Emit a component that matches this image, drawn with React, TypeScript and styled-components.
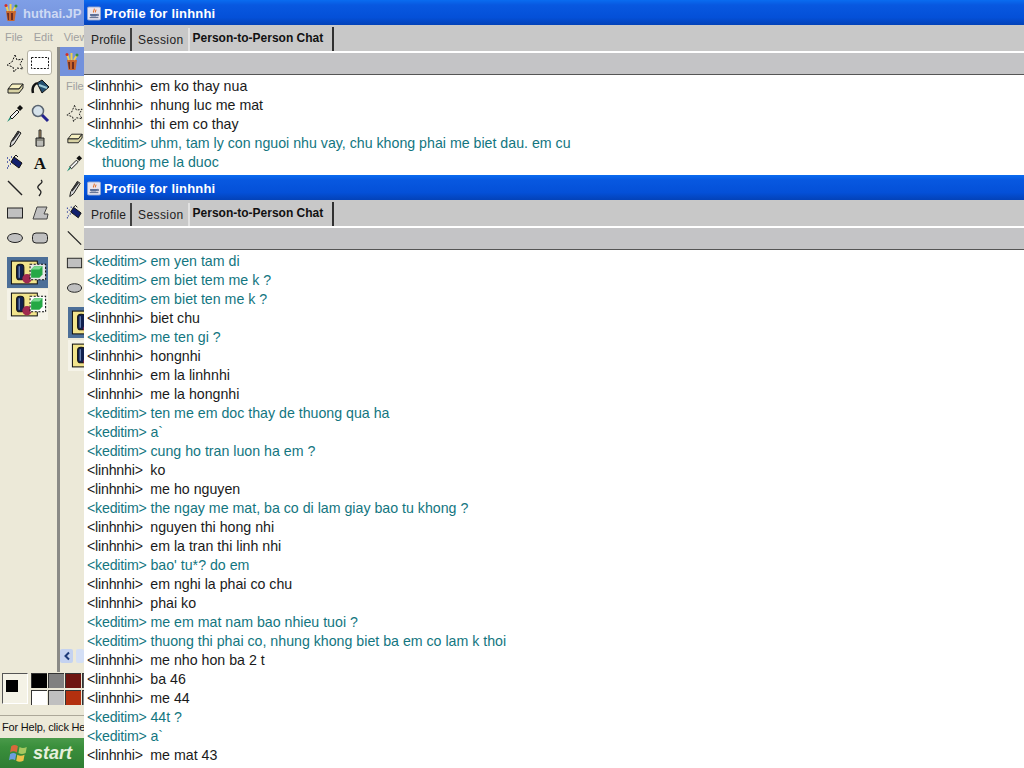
import React from "react";
import styled, { createGlobalStyle } from "styled-components";

//--------------------------------------------------------------------

const GlobalStyle = createGlobalStyle`
  html, body { margin: 0; padding: 0; background: #ece9d8; overflow: hidden; }
  #root { width: 1024px; height: 768px; }
`;

type Line = { who: "l" | "k"; nick?: string; text: string; wrap?: boolean };

const l = (text: string): Line => ({ who: "l", nick: "<linhnhi>  ", text });
const k = (text: string): Line => ({ who: "k", nick: "<keditim> ", text });

const topLines: Line[] = [
  l("em ko thay nua"),
  l("nhung luc me mat"),
  l("thi em co thay"),
  k("uhm, tam ly con nguoi nhu vay, chu khong phai me biet dau. em cu"),
  { who: "k", text: "thuong me la duoc", wrap: true },
];

const bottomLines: Line[] = [
  k("em yen tam di"),
  k("em biet tem me k ?"),
  k("em biet ten me k ?"),
  l("biet chu"),
  k("me ten gi ?"),
  l("hongnhi"),
  l("em la linhnhi"),
  l("me la hongnhi"),
  k("ten me em doc thay de thuong qua ha"),
  k("a`"),
  k("cung ho tran luon ha em ?"),
  l("ko"),
  l("me ho nguyen"),
  k("the ngay me mat, ba co di lam giay bao tu khong ?"),
  l("nguyen thi hong nhi"),
  l("em la tran thi linh nhi"),
  k("bao' tu*? do em"),
  l("em nghi la phai co chu"),
  l("phai ko"),
  k("me em mat nam bao nhieu tuoi ?"),
  k("thuong thi phai co, nhung khong biet ba em co lam k thoi"),
  l("me nho hon ba 2 t"),
  l("ba 46"),
  l("me 44"),
  k("44t ?"),
  k("a`"),
  l("me mat 43"),
];

const JavaIcon = () => (
  <svg width="14" height="15" viewBox="0 0 16 16">
    <rect x="0.5" y="0.5" width="15" height="15" rx="1.5" fill="#e9e4ee" stroke="#8fa4cf" />
    <path d="M8 2.500c1.600 1.600-1.800 2.600-.4 4.400M10 3.500c.9 1.200-1.200 1.900-.3 3.200" fill="none" stroke="#e2702a" strokeWidth="1.2" />
    <path d="M3.500 8.500h8v1.400c0 1-1 1.600-2 1.600h-4c-1 0-2-.6-2-1.600z" fill="#5d6f97" />
    <path d="M11.500 9h1.500v1.500h-1.500M3 12.700h10" fill="none" stroke="#46587f" strokeWidth="1" />
  </svg>
);

const PaintIcon = () => (
  <svg width="18" height="20" viewBox="0 0 18 20">
    <path d="M4 8h10l-1.500 10h-7z" fill="#c9662c" />
    <path d="M6 8 4 2M8.500 8 8.500 1M11 8 14 3" stroke="#f0d050" strokeWidth="2" />
    <path d="M5 10h2v7H6zM9 10h2v7H9z" fill="#6d2e22" />
    <circle cx="4" cy="2.500" r="1.500" fill="#d3302a" />
    <circle cx="14" cy="3" r="1.500" fill="#3d8f3a" />
  </svg>
);

const tools: React.ReactNode[] = [
  <path key="star" d="M10 2l2 5 6-1-3 5 3 5-6-1-3 4-1-5-6-2 5-3z" fill="none" stroke="#111" strokeDasharray="2 1.400" />,
  <rect key="select" x="1.500" y="4.500" width="17" height="11" fill="none" stroke="#111" strokeDasharray="2 1.400" />,
  <g key="eraser"><path d="M3 11l4-5h11l-4 5z" fill="#f6f0c0" stroke="#222" /><path d="M3 11v4h11l4-5V6l-4 5z" fill="#d8d2a4" stroke="#222" /></g>,
  <g key="fill"><path d="M7 5l5-3 7 7-7 6z" fill="#234e6e" stroke="#111" /><path d="M9 7l8 3" stroke="#9cc9d6" strokeWidth="2" /><path d="M7 5C3 7 2 11 3 15" fill="none" stroke="#111" strokeWidth="2.500" /></g>,
  <g key="dropper"><path d="M5 14l7-7 2 2-7 7z" fill="#eee" stroke="#111" /><path d="M12 5l3-3 3 3-3 3z" fill="#111" /><path d="M2 19l4-3-1-2z" fill="#1c8c74" /></g>,
  <g key="zoom"><circle cx="8" cy="8" r="5.500" fill="#d6e2ea" stroke="#5a6470" strokeWidth="1.500" /><path d="M12 12l6 6" stroke="#23238e" strokeWidth="3" /></g>,
  <g key="pencil"><path d="M6 14l7-11 3 2-7 11-4 3z" fill="#ddd" stroke="#111" /><path d="M7 13l7-9" stroke="#333" strokeWidth="2" /></g>,
  <g key="brush"><path d="M9 2h2v8H9z" fill="#b09060" stroke="#333" /><path d="M6 10h8v8H6z" fill="#8a8a80" stroke="#222" /><path d="M8 13v5M10 13v5M12 13v5" stroke="#eee" /></g>,
  <g key="spray"><path d="M9 4l8 6-3 5-8-6z" fill="#12206e" stroke="#111" /><path d="M9 4l2-2 2 2" fill="none" stroke="#111" /><path d="M2 5h1M4 7h1M2 9h1M5 11h1M3 13h1M6 4h1M2 15h1" stroke="#3040a0" strokeWidth="1.500" /></g>,
  <text key="text" x="10" y="16" textAnchor="middle" fontFamily="Liberation Serif, serif" fontWeight="700" fontSize="17" fill="#111">A</text>,
  <path key="line" d="M3 3l14 14" stroke="#222" strokeWidth="1.400" />,
  <path key="curve" d="M11 2c4 3-5 5-3 8s5 3 1 8" fill="none" stroke="#222" strokeWidth="1.300" />,
  <rect key="rect" x="2.500" y="5" width="15" height="10" fill="#c0c0c0" stroke="#222" />,
  <path key="poly" d="M7 4h10l-3 7h4l-1 5H3z" fill="#c0c0c0" stroke="#444" />,
  <ellipse key="ellipse" cx="10" cy="10" rx="7.500" ry="4.500" fill="#c0c0c0" stroke="#222" />,
  <rect key="round" x="2.500" y="5" width="15" height="10" rx="3.500" fill="#c0c0c0" stroke="#222" />,
];

const OptionArt = ({ dashed }: { dashed?: boolean }) => (
  <svg width="38" height="29" viewBox="0 0 36 28">
    <rect x="2" y="3" width="25" height="22" fill="#f2e48c" stroke="#111" />
    <rect x="7" y="6" width="7" height="15" rx="3" fill="#10204e" stroke="#111" />
    <path d="M9.500 8v11" stroke="#8aa6d8" />
    <circle cx="17" cy="20" r="4.500" fill="#a02a50" />
    <rect x="20" y="6" width="15" height="15" fill={dashed ? "#fff" : "#e8e8e8"} stroke="#111" strokeDasharray="2 1.500" />
    <path d="M21 11l3-3h8v8l-3 3h-8z" fill="#25a845" />
    <path d="M24 8h8l-3 3h-8z" fill="#7ad890" />
  </svg>
);

const StartLogo = () => (
  <svg width="20" height="20" viewBox="0 0 18 18">
    <path d="M2 3c2-1.500 4-1.500 6 0l-1 5.500c-2-1.400-4-1.400-6 0z" fill="#d9683c" />
    <path d="M9.500 3.500c2 1.200 4 1.200 6.500 0l-1 5.500c-2.400 1.200-4.500 1.200-6.500 0z" fill="#a6c860" />
    <path d="M1 10c2-1.400 4-1.400 5.500 0l-1 5.500c-1.800-1.300-3.500-1.300-5.500 0z" fill="#6d9ee0" />
    <path d="M7.500 10.500c2 1.200 4 1.200 6.500 0l-1 5.500c-2.400 1.200-4.500 1.200-6.500 0z" fill="#ecc24a" />
  </svg>
);

const App = () => (
  <Desktop>
    <GlobalStyle />
    <PaintWindow>
      <PaintTitle><PaintIcon />huthai.JP</PaintTitle>
      <PaintMenu><span>File</span><span>Edit</span><span>View</span></PaintMenu>
      <PaintBody>
        <ToolGrid>
          {tools.map((t, i) => (
            <ToolButton key={i} $active={i === 1}>
              <svg width="20" height="20" viewBox="0 0 20 20">{t}</svg>
            </ToolButton>
          ))}
        </ToolGrid>
        <OptionBox>
          <OptionCell $active><OptionArt /></OptionCell>
          <OptionCell><OptionArt dashed /></OptionCell>
        </OptionBox>
      </PaintBody>
      <Palette>
        <CurrentColour><FrontColour /></CurrentColour>
        <Swatches>
          {["#000", "#808080", "#6e1510", "#555", "#fff", "#c0c0c0", "#b3300f", "#888"].map((c, i) => (
            <Swatch key={i} $colour={c} />
          ))}
        </Swatches>
      </Palette>
      <StatusBar>For Help, click He</StatusBar>
      <StartButton><StartLogo /><i>start</i></StartButton>
    </PaintWindow>

    <InnerPaint>
      <InnerIcon><PaintIcon /></InnerIcon>
      <InnerMenu>File</InnerMenu>
      <InnerTools>
        {[0, 2, 4, 6, 8, 10, 12, 14].map((i) => (
          <InnerTool key={i}>
            <svg width="20" height="20" viewBox="0 0 20 20">{tools[i]}</svg>
          </InnerTool>
        ))}
      </InnerTools>
      <InnerOptions>
        <OptionCell $active><OptionArt /></OptionCell>
        <OptionCell><OptionArt dashed /></OptionCell>
      </InnerOptions>
      <ScrollRow>
        <ScrollArrow>
          <svg width="8" height="10" viewBox="0 0 8 10">
            <path d="M6 1.500 2.500 5 6 8.500" fill="none" stroke="#1c3a78" strokeWidth="2" />
          </svg>
        </ScrollArrow>
        <ScrollThumb />
      </ScrollRow>
    </InnerPaint>

    <ProfileWindow $top={0} $height={176} lines={topLines} />
    <ProfileWindow $top={175} $height={593} lines={bottomLines} />
  </Desktop>
);

const ProfileWindow = ({ $top, $height, lines }: { $top: number; $height: number; lines: Line[] }) => (
  <JavaWindow $top={$top} $height={$height}>
    <JavaTitle><JavaIcon />Profile for linhnhi</JavaTitle>
    <TabStrip>
      <Tab>Profile</Tab>
      <SessionTab>Session</SessionTab>
      <ActiveTab>Person-to-Person Chat</ActiveTab>
    </TabStrip>
    <GrayBar />
    <ChatLog>
      {lines.map((line, i) => (
        <ChatLine key={i} $who={line.who} $wrap={line.wrap}>
          {line.nick && <Nick>{line.nick}</Nick>}
          {line.text}
        </ChatLine>
      ))}
    </ChatLog>
  </JavaWindow>
);

export default App;

const Desktop = styled.div`
  position: relative;
  width: 1024px;
  height: 768px;
  overflow: hidden;
  background: #ece9d8;
  font-family: "Liberation Sans", Arial, sans-serif;
`;

const PaintWindow = styled.div`
  width: 84px;
  height: 768px;
  display: flex;
  flex-direction: column;
  background: #ece9d8;
`;

const PaintTitle = styled.div`
  height: 26px;
  flex: none;
  display: flex;
  align-items: center;
  gap: 3px;
  padding-left: 2px;
  background: linear-gradient(#7f9fe6, #7391dc);
  color: #cdd9f4;
  font-weight: 700;
  font-size: 13px;
  white-space: nowrap;
  overflow: hidden;
`;

const PaintMenu = styled.div`
  height: 21px;
  flex: none;
  display: flex;
  align-items: center;
  gap: 11px;
  padding-left: 5px;
  font-size: 11px;
  color: #a0a0a0;
  white-space: nowrap;
  overflow: hidden;
`;

const PaintBody = styled.div`
  height: 623px;
  flex: none;
  width: 57px;
  padding-top: 3px;
  box-sizing: border-box;
`;

const ToolGrid = styled.div`
  display: grid;
  grid-template-columns: 25px 25px;
  grid-auto-rows: 25px;
  padding-left: 2px;
`;

const ToolButton = styled.div<{ $active?: boolean }>`
  display: flex;
  align-items: center;
  justify-content: center;
  border-radius: 3px;
  background: ${(p) => (p.$active ? "#fff" : "transparent")};
  border: 1px solid ${(p) => (p.$active ? "#b5b2a4" : "transparent")};
`;

const OptionBox = styled.div`
  margin: 7px 0 0 7px;
  width: 41px;
  display: flex;
  flex-direction: column;
  gap: 1px;
`;

const OptionCell = styled.div<{ $active?: boolean }>`
  height: 31px;
  display: flex;
  align-items: center;
  justify-content: center;
  background: ${(p) => (p.$active ? "#4d6f98" : "#f5f3e8")};
`;

const Palette = styled.div`
  height: 46px;
  flex: none;
  display: flex;
  gap: 3px;
  padding: 3px 0 0 2px;
  box-sizing: border-box;
  border-bottom: 1px solid #aca899;
  overflow: hidden;
`;

const CurrentColour = styled.div`
  flex: none;
  width: 26px;
  height: 31px;
  box-sizing: border-box;
  border: 1px solid;
  border-color: #555 #fff #fff #555;
  background: #f4f2e6;
  padding: 6px 3px;
`;

const FrontColour = styled.div`
  width: 12px;
  height: 12px;
  background: #000;
`;

const Swatches = styled.div`
  display: grid;
  grid-template-columns: repeat(4, 16px);
  grid-auto-rows: 15px;
  gap: 2px 1px;
`;

const Swatch = styled.div<{ $colour: string }>`
  background: ${(p) => p.$colour};
  border-top: 1px solid #333;
  border-left: 1px solid #333;
`;

const StatusBar = styled.div`
  height: 22px;
  flex: none;
  display: flex;
  align-items: center;
  padding-left: 2px;
  font-size: 11px;
  letter-spacing: -0.2px;
  color: #111;
  white-space: nowrap;
  overflow: hidden;
`;

const StartButton = styled.div`
  flex: 1;
  display: flex;
  align-items: center;
  gap: 4px;
  padding-left: 9px;
  background: linear-gradient(#4a9a4a, #3a8f3c 30%, #2f7d33);
  color: #e6f0dc;
  font-size: 18px;
  font-weight: 700;
`;

const InnerPaint = styled.div`
  position: absolute;
  left: 57px;
  top: 47px;
  width: 27px;
  height: 625px;
  overflow: hidden;
  background: #ece9d8;
  border-left: 3px solid #8a8a86;
  box-sizing: border-box;
`;

const InnerIcon = styled.div`
  height: 29px;
  display: flex;
  align-items: center;
  justify-content: center;
  background: #7391dc;
`;

const InnerMenu = styled.div`
  height: 21px;
  padding-left: 6px;
  font-size: 11px;
  line-height: 21px;
  color: #a0a0a0;
`;

const InnerTools = styled.div`
  margin-top: 3px;
  display: flex;
  flex-direction: column;
`;

const InnerTool = styled.div`
  height: 25px;
  display: flex;
  align-items: center;
  padding-left: 5px;
`;

const InnerOptions = styled.div`
  margin: 7px 0 0 8px;
  width: 41px;
  display: flex;
  flex-direction: column;
  gap: 2px;
`;

const ScrollRow = styled.div`
  position: absolute;
  left: 0;
  top: 602px;
  width: 24px;
  height: 14px;
  display: flex;
  gap: 3px;
`;

const ScrollArrow = styled.div`
  width: 13px;
  flex: none;
  display: flex;
  align-items: center;
  justify-content: center;
  border-radius: 2px;
  background: #c4d2f0;
`;

const ScrollThumb = styled.div`
  flex: 1;
  border-radius: 2px;
  background: #d4dff5;
`;

const JavaWindow = styled.div<{ $top: number; $height: number }>`
  position: absolute;
  left: 84px;
  top: ${(p) => p.$top}px;
  width: 940px;
  height: ${(p) => p.$height}px;
  background: #fff;
  display: flex;
  flex-direction: column;
  overflow: hidden;
`;

const JavaTitle = styled.div`
  height: 25px;
  flex: none;
  box-sizing: border-box;
  display: flex;
  align-items: center;
  gap: 3px;
  padding: 1px 0 0 3px;
  background: linear-gradient(#0a6cf0 0, #0858e0 20%, #0450d8 70%, #0342b8);
  color: #fff;
  font-size: 13px;
  font-weight: 700;
  letter-spacing: 0.2px;
`;

const TabStrip = styled.div`
  height: 28px;
  flex: none;
  box-sizing: border-box;
  display: flex;
  align-items: stretch;
  padding-left: 1px;
  background: #c8c8c8;
  border-bottom: 2px solid #fff;
  font-size: 12px;
`;

const Tab = styled.div`
  display: flex;
  align-items: center;
  margin-top: 3px;
  padding: 1px 4px 0 6px;
  color: #222;
  letter-spacing: 0.15px;
  border-right: 2px solid #404040;
`;

const SessionTab = styled(Tab)`
  padding-left: 6px;
  letter-spacing: 0.4px;
  border-right-color: #e2e2e2;
`;

const ActiveTab = styled.div`
  display: flex;
  align-items: center;
  margin-top: 2px;
  padding: 0 9px 3px 3px;
  color: #111;
  font-weight: 700;
  border-right: 2px solid #303030;
`;

const GrayBar = styled.div`
  height: 22px;
  flex: none;
  box-sizing: border-box;
  background: #c4c4c6;
  border-bottom: 1px solid #555;
`;

const ChatLog = styled.div`
  flex: 1;
  padding: 2px 0 0 3px;
  background: #fff;
`;

const ChatLine = styled.div<{ $who: "l" | "k"; $wrap?: boolean }>`
  height: 19px;
  line-height: 19px;
  font-size: 14.2px;
  white-space: pre;
  color: ${(p) => (p.$who === "k" ? "#13767f" : "#1a1a1a")};
  padding-left: ${(p) => (p.$wrap ? "15px" : "0")};
`;

const Nick = styled.span`
  letter-spacing: -0.2px;
`;
